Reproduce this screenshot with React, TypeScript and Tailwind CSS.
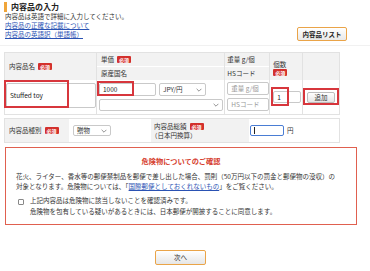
import React from 'react';

const Badge = () => (
  <span className="inline-flex items-center justify-center bg-[#d3302c] text-white text-[5px] font-bold leading-none px-[2px] h-[7px] rounded-[1px] ml-[3px]">
    必須
  </span>
);

const Chevron = () => (
  <svg width="6" height="4" viewBox="0 0 6 4" className="text-[#666] shrink-0">
    <path d="M0.6 0.8 L3 3.2 L5.4 0.8" fill="none" stroke="currentColor" strokeWidth="0.7" />
  </svg>
);

// 下拉框（用 div 画，避免原生 select 的渲染差异）
const FakeSelect = ({ label, className }: { label?: string; className: string }) => (
  <div className={`flex items-center justify-between border border-[#c9c9c9] rounded-[2px] bg-white pl-[3px] pr-[3px] ${className}`}>
    <span>{label}</span>
    <Chevron />
  </div>
);

const Field = ({ value, placeholder, className }: { value?: string; placeholder?: string; className: string }) => (
  <div className={`flex items-center border border-[#c9c9c9] rounded-[2px] bg-white px-[3px] ${className}`}>
    {value ? <span className="text-[#222]">{value}</span> : <span className="text-[#999]">{placeholder}</span>}
  </div>
);

// 红色标注框
const Mark = ({ className }: { className: string }) => (
  <div className={`absolute border-2 border-[#d7363c] pointer-events-none ${className}`} />
);

export default function App() {
  return (
    <div className="relative w-[370px] h-[271px] overflow-hidden bg-white text-[#333] font-['Noto_Sans_CJK_JP',sans-serif] text-[6.5px] leading-[9px]">
      {/* 标题 + 说明 */}
      <div className="flex items-start justify-between pt-[2px]">
        <div className="pl-[4px]">
          <div className="flex items-center h-[10px]">
            <div className="w-[3px] h-[10px] bg-[#f0a53a]" />
            <div className="ml-[4px] text-[8px] font-bold leading-[10px] text-[#222]">内容品の入力</div>
          </div>
          <div className="pl-[1px]">
            <div>内容品は英語で詳細に入力してください。</div>
            <div className="text-[#2a52b3] underline">内容品の正確な記載について</div>
            <div className="text-[#2a52b3] underline">内容品の英語訳（単語帳）</div>
          </div>
        </div>
        <div className="mr-[23px] mt-[25px] w-[50px] h-[14px] flex items-center justify-center border border-[#eaa448] rounded-[2px] bg-gradient-to-b from-white to-[#e9e9e9] font-bold text-[6.5px] text-[#222]">
          内容品リスト
        </div>
      </div>

      <div className="mt-[4px] h-[1px] bg-[#f1f1f1]" />

      {/* 内容品表 */}
      <div className="mt-[6px] ml-[4px] w-[336px] flex border border-[#e2e2e2]">
        <div className="w-[92px] flex flex-col border-r border-[#e2e2e2]">
          <div className="h-[27px] bg-[#f2f2f2] flex items-center pl-[4px]">
            内容品名<Badge />
          </div>
          <div className="h-[34px] pt-[3px] pl-[1px]">
            <Field value="Stuffed toy" className="w-[90px] h-[25px]" />
          </div>
        </div>

        <div className="w-[129px] flex flex-col border-r border-[#e2e2e2]">
          <div className="h-[14px] bg-[#f2f2f2] flex items-center pl-[4px] border-b border-white">
            単価<Badge />
          </div>
          <div className="h-[13px] bg-[#f2f2f2] flex items-center pl-[4px]">原産国名</div>
          <div className="h-[34px] pt-[3px] pl-[2px] flex flex-col gap-[3px]">
            <div className="flex gap-[3px]">
              <Field value="1000" className="w-[57px] h-[13px]" />
              <FakeSelect label="JPY/円" className="w-[47px] h-[13px]" />
            </div>
            <FakeSelect className="w-[124px] h-[12px]" />
          </div>
        </div>

        <div className="w-[45px] flex flex-col border-r border-[#e2e2e2]">
          <div className="h-[14px] bg-[#f2f2f2] flex items-center pl-[2px] border-b border-white">重量 g/個</div>
          <div className="h-[13px] bg-[#f2f2f2] flex items-center pl-[2px]">HSコード</div>
          <div className="h-[34px] pt-[2px] pl-[2px] flex flex-col gap-[3px]">
            <Field placeholder="重量 g/個" className="w-[42px] h-[13px]" />
            <Field placeholder="HSコード" className="w-[42px] h-[13px]" />
          </div>
        </div>

        <div className="w-[33px] flex flex-col border-r border-[#e2e2e2]">
          <div className="h-[27px] bg-[#f2f2f2] flex flex-col justify-center pl-[3px] pt-[2px]">
            <div className="leading-[8px]">個数</div>
            <div className="-ml-[3px] leading-[8px]"><Badge /></div>
          </div>
          <div className="h-[34px] flex items-center pl-[3px]">
            <Field value="1" className="w-[28px] h-[12px]" />
          </div>
        </div>

        <div className="w-[36px] flex flex-col">
          <div className="h-[27px] bg-[#f2f2f2]" />
          <div className="h-[34px] flex items-center justify-center">
            <div className="w-[28px] h-[11px] flex items-center justify-center border border-[#bdbdbd] rounded-[2px] bg-gradient-to-b from-white to-[#e6e6e6]">
              追加
            </div>
          </div>
        </div>
      </div>

      {/* 内容品种别 / 总额 */}
      <div className="mt-[3px] ml-[4px] w-[336px] h-[25px] flex border border-[#e2e2e2]">
        <div className="w-[64px] bg-[#f2f2f2] flex items-center pl-[4px]">
          内容品種別<Badge />
        </div>
        <div className="w-[82px] flex items-center pl-[4px]">
          <FakeSelect label="贈物" className="w-[38px] h-[11px]" />
        </div>
        <div className="w-[98px] bg-[#f2f2f2] flex flex-col justify-center pl-[3px]">
          <div className="flex items-center">内容品総額<Badge /></div>
          <div className="-ml-[3px]">（日本円換算）</div>
        </div>
        <div className="flex-1 flex items-center pl-[1px]">
          <div className="w-[34px] h-[11px] border-[1.5px] border-[#4a7dd4] rounded-[2px] flex items-center pl-[3px]">
            <div className="w-[0.5px] h-[7px] bg-[#222]" />
          </div>
          <span className="ml-[3px]">円</span>
        </div>
      </div>

      {/* 危険物确认 */}
      <div className="mt-[4px] ml-[5px] w-[352px] h-[78px] border border-[#e0604f]">
        <div className="pt-[9px] text-center text-[7.2px] font-bold text-[#d6402e] leading-[9px]">危険物についてのご確認</div>
        <div className="mt-[5px] pl-[10px] leading-[10px]">
          <div>花火、ライター、香水等の郵便禁制品を郵便で差し出した場合、罰則（50万円以下の罰金と郵便物の没収）の</div>
          <div>
            対象となります。危険物については、「
            <span className="text-[#2a52b3] underline">国際郵便としておくれないもの</span>
            」をご覧ください。
          </div>
        </div>
        <div className="mt-[4px] pl-[12px] flex items-start leading-[11px]">
          <div className="mt-[4px] w-[6px] h-[6px] border border-[#888] rounded-[1px] bg-white shrink-0" />
          <div className="ml-[6px]">
            <div>上記内容品は危険物に該当しないことを確認済みです。</div>
            <div>危険物を包有している疑いがあるときには、日本郵便が開披することに同意します。</div>
          </div>
        </div>
      </div>

      <div className="mt-[25px] ml-[155px] w-[51px] h-[15px] flex items-center justify-center border border-[#eaa448] rounded-[2px] bg-gradient-to-b from-white to-[#e6e6e6] text-[#222]">
        次へ
      </div>

      <Mark className="left-[4px] top-[80px] w-[65px] h-[28px]" />
      <Mark className="left-[97px] top-[81px] w-[37px] h-[15px]" />
      <Mark className="left-[271px] top-[87px] w-[18px] h-[19px]" />
      <Mark className="left-[303px] top-[88px] w-[36px] h-[17px]" />
    </div>
  );
}
